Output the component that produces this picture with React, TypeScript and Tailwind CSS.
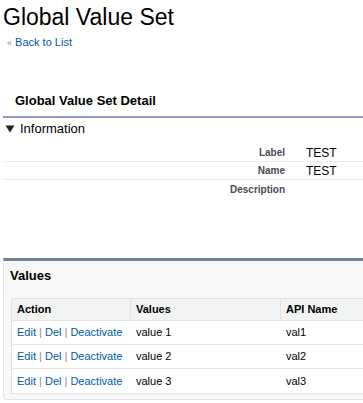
import React from "react";

const rows = [
  { v: "value 1", api: "val1" },
  { v: "value 2", api: "val2" },
  { v: "value 3", api: "val3" },
];

export default function App() {
  return (
    <div className="w-[363px] h-[403px] overflow-hidden bg-white text-[#000] font-['Liberation_Sans',Arial,sans-serif]">
      <div className="w-[440px]">
        <h1 className="pl-[3px] pt-[4px] text-[23px] leading-[27px] text-[#000]">Global Value Set</h1>
        <div className="pl-[7px] mt-[4px] text-[11px] leading-[14px]">
          <span className="text-[#8a8a8a] text-[9px]">«</span>{" "}
          <a className="text-[#015ba7]">Back to List</a>
        </div>

        <div className="mt-[43px] pl-[15px] text-[13px] leading-[16px] font-bold text-[#000]">Global Value Set Detail</div>
        <div className="mt-[7px] ml-[3px] h-[2px] bg-[#8e9dbe]" />
        <div className="mt-[3px] ml-[5px] flex items-center text-[13px] leading-[16px]">
          <svg width="10" height="8" viewBox="0 0 10 8" className="mr-[5px]">
            <path d="M0.5 0.5 L9.5 0.5 L5 7.5 Z" fill="#222" />
          </svg>
          <span>Information</span>
        </div>
        <div className="mt-[7px] ml-[3px]">
          {[
            ["Label", "TEST"],
            ["Name", "TEST"],
            ["Description", ""],
          ].map(([l, v], i) => (
            <div
              key={l}
              className={`flex h-[18px] items-center ${i < 2 ? "border-b border-[#ececec]" : ""}`}
            >
              <div className="w-[282px] text-right text-[10px] font-bold text-[#4a4a56]">{l}</div>
              <div className="pl-[21px] text-[12px] text-[#000]">{v}</div>
            </div>
          ))}
        </div>

        <div className="mt-[60px] ml-[3px] border-t-[3px] border-t-[#747e96] border-x border-b border-[#e0e3e5] rounded-b-[4px] bg-[#f8f8f8] pb-[5px]">
          <div className="pl-[6px] pt-[7px] pb-[14px] text-[13px] leading-[16px] font-bold text-[#000]">Values</div>
          <div className="ml-[7px] border border-[#e0e3e5] bg-white">
            <div className="flex h-[22px] items-center bg-[#f2f3f3] border-b border-[#e0e3e5] text-[11px] font-bold text-[#000]">
              <div className="w-[119px] pl-[5px] h-full flex items-center border-r border-[#e0e3e5]">Action</div>
              <div className="w-[150px] pl-[5px] h-full flex items-center border-r border-[#e0e3e5]">Values</div>
              <div className="pl-[5px]">API Name</div>
            </div>
            {rows.map((r, i) => (
              <div
                key={r.v}
                className={`flex h-[24px] items-center text-[11px] ${i < 2 ? "border-b border-[#e3e3e3]" : ""}`}
              >
                <div className="w-[119px] pl-[5px] whitespace-nowrap text-[#015ba7]">
                  Edit <span className="text-[#8a8a8a]">|</span> Del <span className="text-[#8a8a8a]">|</span> Deactivate
                </div>
                <div className="w-[150px] pl-[5px] text-[#000]">{r.v}</div>
                <div className="pl-[5px] text-[#000]">{r.api}</div>
              </div>
            ))}
          </div>
        </div>
      </div>
    </div>
  );
}
